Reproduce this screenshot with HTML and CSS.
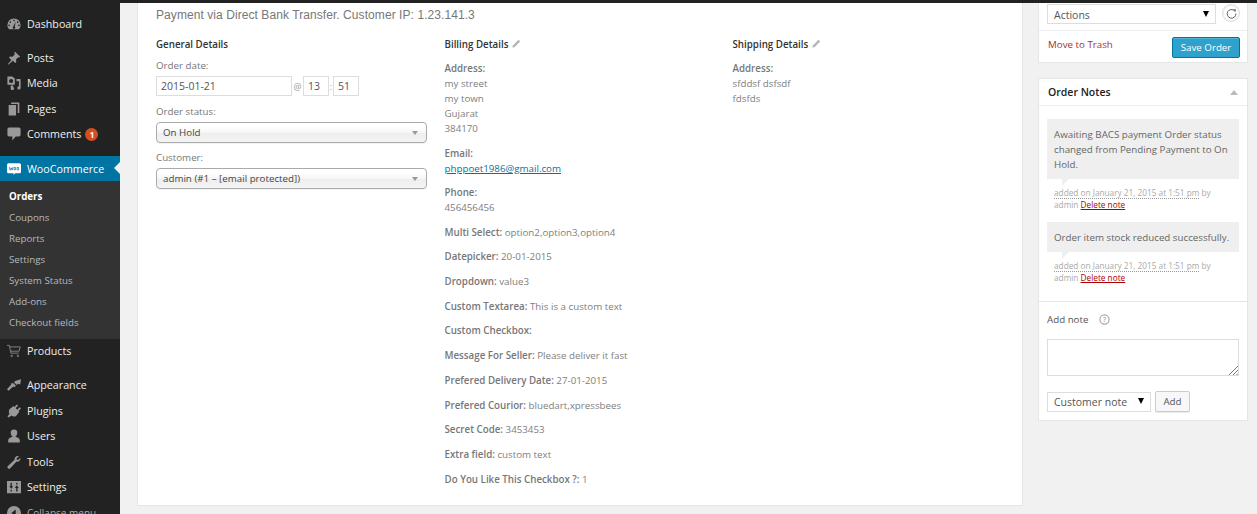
FILE: index.html
```html
<!DOCTYPE html>
<html lang="en">
<head>
<meta charset="utf-8">
<title>Edit Order</title>
<link rel="stylesheet" href="styles.css">
</head>
<body>
<div class="topbar"></div>
<div class="shell">
  <nav class="sidebar">
    <a class="item first"><svg class="ico" viewBox="1.500 2.500 17 14.500"><path d="M10 3a8 8 0 0 0-8 8c0 2 .7 3.800 2 5h12c1.300-1.200 2-3 2-5a8 8 0 0 0-8-8zM10 4.500a1 1 0 1 1 0 2 1 1 0 0 1 0-2zM5.500 6.500a1 1 0 1 1 0 2 1 1 0 0 1 0-2zM14.500 6.500a1 1 0 1 1 0 2 1 1 0 0 1 0-2zM4 10.500a1 1 0 1 1 0 2 1 1 0 0 1 0-2zM16 10.500a1 1 0 1 1 0 2 1 1 0 0 1 0-2zM12 7l-1 6.200a1.500 1.500 0 1 1-2 0z" fill-rule="evenodd"/></svg>Dashboard</a>
    <a class="item gap"><svg class="ico" viewBox="1.500 1.500 17 18"><path d="M11 2l7 7-1.500 1-1-.5-3 3 .5 3-1.500 1.500-3-3L3 19l-1-.5 4.500-5.500-3-3L5 8.500l3 .5 3-3-.5-1z"/></svg>Posts</a>
    <a class="item"><svg class="ico" viewBox="1.500 1.500 17 17"><path d="M2 2h6l2 2h1v8H2zM6.500 5a2.500 2.500 0 1 0 0 5 2.500 2.500 0 0 0 0-5zM13 5h5v11a2 2 0 1 1-2-2V8h-3zM6 13h3v2a2 2 0 1 1-3 1.500z" fill-rule="evenodd"/></svg>Media</a>
    <a class="item"><svg class="ico" viewBox="3 1.500 15 17"><path d="M7 2h10v13h-2V4H7zM4 5h9v13H4z"/></svg>Pages</a>
    <a class="item"><svg class="ico" viewBox="1.500 2.500 17 17"><path d="M4 3h12a2 2 0 0 1 2 2v7a2 2 0 0 1-2 2h-4l-4 5v-5H4a2 2 0 0 1-2-2V5a2 2 0 0 1 2-2z"/></svg>Comments<span class="badge">1</span></a>
    <a class="item woo"><svg class="ico woo-ico" viewBox="1 2.500 18 16"><path d="M3 3h14a2 2 0 0 1 2 2v9a2 2 0 0 1-2 2h-5l-3 2 .5-2H3a2 2 0 0 1-2-2V5a2 2 0 0 1 2-2z" fill="#fff"/><path d="M4 8l1 4 1.500-3 1 3 1.300-4M10 8.500h2v3h-2zM14 8.500h2v3h-2z" fill="none" stroke="#0074a2" stroke-width=".9"/></svg>WooCommerce<span class="caret"></span></a>
    <div class="submenu">
      <a class="sub current">Orders</a>
      <a class="sub">Coupons</a>
      <a class="sub">Reports</a>
      <a class="sub">Settings</a>
      <a class="sub">System Status</a>
      <a class="sub">Add-ons</a>
      <a class="sub">Checkout fields</a>
    </div>
    <a class="item products"><svg class="ico" viewBox="1 2.500 18 15.500"><path d="M1 3h3l2 10h10M4.500 5H18l-1.500 5.500H6M7 15.500a1 1 0 1 0 0 2 1 1 0 0 0 0-2zM15 15.500a1 1 0 1 0 0 2 1 1 0 0 0 0-2z" fill="none" stroke="currentColor" stroke-width="1"/></svg>Products</a>
    <a class="item gap2"><svg class="ico" viewBox="1 2.500 18 16"><path d="M19 3l-1 7-3-1-1.500 1.500L10 7l1.500-1.500zM9 8l3.500 3.500-2 2L9 12.500 3 18l-2-2 5.500-6L5.500 9z"/></svg>Appearance</a>
    <a class="item"><svg class="ico" viewBox="2 1.500 17 17"><path d="M14 2l1.500 1.500-3 3 2 2 3-3L19 7l-3 3 1 1-4 5c-2 1-4 1-5.500-.5L4 18l-1.500-1.500 2.500-3C4 12 4 10 5 8l5-4 1 1z"/></svg>Plugins</a>
    <a class="item"><svg class="ico" viewBox="2.500 1.500 15 17"><path d="M10 2a4 4 0 0 1 4 4c0 2-1 4-2.500 5 3 .5 5.500 2 5.500 4v3H3v-3c0-2 2.500-3.500 5.500-4C7 10 6 8 6 6a4 4 0 0 1 4-4z"/></svg>Users</a>
    <a class="item"><svg class="ico" viewBox="2 1.500 17.500 18"><path d="M17 3l-3 3 .5 1.500L16 8l3-3c.3 3-1.500 5.500-5 5l-8 8.500a1.500 1.500 0 0 1-3-3l8.500-8C11 4 14 1.800 17 3z"/></svg>Tools</a>
    <a class="item"><svg class="ico" viewBox="2 3 16 14"><path d="M2 3h16v14H2zM6 5v4H4.500L7 12l2-3H7.500V5zM12.500 15v-4H11l2-3 2.500 3H14v4zM6 13v2h1.500v-2zM12.500 5v2H14V5z" fill-rule="evenodd"/></svg>Settings</a>
    <a class="collapse"><svg class="ico-small" viewBox="2 2 16 16"><path d="M10 2a8 8 0 1 1 0 16 8 8 0 0 1 0-16zm2 4L7 10l5 4z" fill-rule="evenodd"/></svg>Collapse menu</a>
  </nav>

  <main class="content">
    <section class="order-card">
      <p class="payment">Payment via Direct Bank Transfer. Customer IP: 1.23.141.3</p>
      <div class="columns">
        <div class="col col-general">
          <h4>General Details</h4>
          <label class="f-label first-label">Order date:</label>
          <div class="date-row">
            <span class="input date">2015-01-21</span><span class="sep">@</span><span class="input time">13</span><span class="sep colon">:</span><span class="input time">51</span>
          </div>
          <label class="f-label status-label">Order status:</label>
          <div class="chosen"><span>On Hold</span><i class="tri"></i></div>
          <label class="f-label">Customer:</label>
          <div class="chosen"><span>admin (#1 – [email protected])</span><i class="tri"></i></div>
        </div>
        <div class="col col-billing">
          <h4>Billing Details <svg class="pencil" viewBox="0 0 12 12"><path d="M9 1l2 2-6.500 6.500-3 1 1-3z"/></svg></h4>
          <p class="block"><b>Address:</b><br>my street<br>my town<br>Gujarat<br>384170</p>
          <p class="block"><b>Email:</b><br><a class="mail">phppoet1986@gmail.com</a></p>
          <p class="block"><b>Phone:</b><br>456456456</p>
          <p class="line"><b>Multi Select:</b> option2,option3,option4</p>
          <p class="line"><b>Datepicker:</b> 20-01-2015</p>
          <p class="line"><b>Dropdown:</b> value3</p>
          <p class="line"><b>Custom Textarea:</b> This is a custom text</p>
          <p class="line"><b>Custom Checkbox:</b></p>
          <p class="line"><b>Message For Seller:</b> Please deliver it fast</p>
          <p class="line"><b>Prefered Delivery Date:</b> 27-01-2015</p>
          <p class="line"><b>Prefered Courior:</b> bluedart,xpressbees</p>
          <p class="line"><b>Secret Code:</b> 3453453</p>
          <p class="line"><b>Extra field:</b> custom text</p>
          <p class="line"><b>Do You Like This Checkbox ?:</b> 1</p>
        </div>
        <div class="col col-shipping">
          <h4>Shipping Details <svg class="pencil" viewBox="0 0 12 12"><path d="M9 1l2 2-6.500 6.500-3 1 1-3z"/></svg></h4>
          <p class="block"><b>Address:</b><br>sfddsf dsfsdf<br>fdsfds</p>
        </div>
      </div>
    </section>

    <aside class="side">
      <section class="box actions-box">
        <div class="actions-row">
          <div class="native actions-select"><span>Actions</span><i class="arrow"></i></div>
          <span class="refresh"><svg viewBox="0 0 18 18"><path d="M13.500 5.500A6 6 0 1 0 15 9" fill="none" stroke="#555" stroke-width="1.300"/><path d="M11.500 3.500l3.500-.5-.3 3.800z" fill="#555"/></svg></span>
        </div>
        <div class="save-row">
          <a class="trash">Move to Trash</a>
          <span class="save">Save Order</span>
        </div>
      </section>

      <section class="box notes-box">
        <header class="notes-head"><h3>Order Notes</h3><i class="up"></i></header>
        <div class="notes">
          <div class="note">
            <div class="note-text">Awaiting BACS payment Order status changed from Pending Payment to On Hold.</div>
            <p class="meta"><abbr>added on January 21, 2015 at 1:51 pm</abbr> by admin <a>Delete note</a></p>
          </div>
          <div class="note">
            <div class="note-text">Order item stock reduced successfully.</div>
            <p class="meta"><abbr>added on January 21, 2015 at 1:51 pm</abbr> by admin <a>Delete note</a></p>
          </div>
        </div>
        <div class="add-note">
          <div class="add-title">Add note <svg class="help" viewBox="0 0 12 12"><circle cx="6" cy="6" r="5" fill="none" stroke="#aaa" stroke-width="1.300"/><text x="6" y="8.700" text-anchor="middle" class="help-q">?</text></svg></div>
          <div class="textarea"><svg class="grip" viewBox="0 0 9 9"><path d="M0 9L9 0M4 9l5-5M7.500 9L9 7.500" stroke="#555" stroke-width=".8"/></svg></div>
          <div class="add-row">
            <div class="native note-type"><span>Customer note</span><i class="arrow"></i></div>
            <span class="add-btn">Add</span>
          </div>
        </div>
      </section>
    </aside>
  </main>
</div>
</body>
</html>
```
FILE: styles.css
```css
* { box-sizing: border-box; }
html, body { margin: 0; height: 514px; overflow: hidden; }
body { background: #f1f1f1; font-family: "Open Sans", sans-serif; font-size: 9.750px; color: #777; }
.topbar { height: 3px; background: #222; }
.shell { display: flex; height: 511px; }

.sidebar { width: 120px; flex: none; background: #222; color: #eee; font-size: 10.700px; display: flex; flex-direction: column; overflow: hidden; }
.item { display: flex; align-items: center; height: 25.500px; flex: none; padding-left: 7px; color: #eee; position: relative; }
.item.first { margin-top: 8px; }
.item.gap { margin-top: 8.500px; }
.item.woo { margin-top: 9px; height: 25px; background: #0074a2; color: #fff; }
.item.products { height: 24px; }
.item.gap2 { margin-top: 9.300px; }
.ico { width: 14px; height: 14px; margin-right: 6px; fill: #999; color: #999; flex: none; }
.badge { display: inline-block; width: 13px; height: 13px; border-radius: 50%; background: #d54e21; color: #fff; font-size: 8px; font-weight: 700; line-height: 13px; text-align: center; margin-left: 4px; }
.caret { position: absolute; right: 0; top: 6px; border: 6px solid transparent; border-right-color: #f1f1f1; border-left: 0; }
.submenu { background: #333; height: 158px; padding-top: 5px; flex: none; }
.sub { display: block; height: 21px; line-height: 21px; padding-left: 9px; font-size: 9.750px; color: #b4b9be; white-space: nowrap; }
.sub.current { color: #fff; font-weight: 700; }
.collapse { display: flex; align-items: center; padding-left: 7px; height: 27px; flex: none; color: #aaa; font-size: 10px; white-space: nowrap; }
.ico-small { width: 14px; height: 14px; margin-right: 6px; fill: #999; }

.content { flex: 1; min-width: 0; display: flex; align-items: flex-start; padding-left: 17px; gap: 15px; }
.order-card { width: 886px; height: 503px; flex: none; background: #fff; border: 1px solid #e5e5e5; border-top: 0; padding: 5px 18px 0; }
.payment { margin: 0; font-family: "Liberation Sans", sans-serif; font-size: 12px; line-height: 14px; color: #777; letter-spacing: .07px; }
.columns { display: flex; margin-top: 15px; }
.col { flex: none; }
.col-general { width: 288.500px; }
.col-billing { width: 288px; }
h4 { margin: 0; font-size: 9.750px; line-height: 15px; font-weight: 600; color: #333; }
.pencil { width: 10px; height: 10px; fill: #b5b5b5; vertical-align: -1px; margin-left: 0; }
.f-label { display: block; font-size: 9.750px; line-height: 15px; margin-top: 7px; color: #777; }
.first-label { margin-top: 6px; }
.status-label { margin-top: 8px; }
.date-row { display: flex; align-items: center; height: 20px; margin-top: 3px; }
.input { display: block; height: 20px; border: 1px solid #ddd; font-size: 10.500px; line-height: 18px; color: #555; padding-left: 4px; background: #fff; }
.date { width: 136px; }
.time { width: 26px; padding-left: 4px; }
.sep { width: 11px; text-align: center; font-size: 9px; color: #999; }
.sep.colon { width: 4px; }
.chosen { display: flex; align-items: center; justify-content: space-between; width: 271px; height: 21px; margin-top: 3px; padding: 0 8px 0 6px; border: 1px solid #aaa; border-radius: 4px; background: linear-gradient(#fff 20%, #f6f6f6 50%, #eee 52%, #f4f4f4); box-shadow: 0 1px 0 rgba(0,0,0,.05); font-size: 9.750px; color: #444; }
.tri { width: 0; height: 0; border: 3px solid transparent; border-top: 4px solid #999; border-bottom: 0; }
.block { margin: 0; padding-top: 9px; font-size: 9.750px; line-height: 15px; color: #808080; }
.block + .block { padding-top: 9.500px; }
.block b { font-weight: 600; color: #777; }
.mail { color: #0074a2; text-decoration: underline; }
.line { margin: 0; padding-top: 9.700px; font-size: 9.750px; line-height: 15px; color: #808080; white-space: nowrap; }
.line b { font-weight: 600; color: #777; }

.side { width: 210px; flex: none; display: flex; flex-direction: column; gap: 15px; }
.box { background: #fff; border: 1px solid #e5e5e5; }
.actions-box { border-top: 0; height: 60px; }
.actions-row { height: 28px; display: flex; align-items: flex-start; padding: 1px 0 0 8px; border-bottom: 1px solid #eee; }
.native { display: flex; align-items: center; justify-content: space-between; height: 20px; border: 1px solid #ddd; background: #fff; font-size: 10.500px; color: #555; padding: 1px 6px 0 6px; }
.actions-select { width: 169px; }
.arrow { width: 0; height: 0; border: 3px solid transparent; border-top: 6px solid #000; border-bottom: 0; margin-top: -2px; }
.refresh { display: flex; align-items: center; justify-content: center; width: 18px; height: 18px; border: 1px solid #ddd; border-radius: 50%; margin-left: 6px; box-shadow: inset 0 0 0 1px #f1f1f1; }
.refresh svg { display: block; width: 13px; height: 13px; }
.save-row { display: flex; justify-content: space-between; padding: 6px 7px 0 9px; align-items: flex-start; }
.trash { font-size: 9.750px; line-height: 15px; color: #a8321f; }
.save { display: block; width: 68px; height: 21px; background: #2ea2cc; border: 1px solid #0074a2; border-radius: 2px; color: #fff; font-size: 9.750px; line-height: 19px; text-align: center; box-shadow: inset 0 1px 0 rgba(120,200,230,.5); }
.notes-box { height: 343px; }
.notes-head { display: flex; align-items: center; justify-content: space-between; height: 27px; padding: 0 9px 0 9px; border-bottom: 1px solid #eee; }
h3 { margin: 0; font-size: 10.500px; font-weight: 600; color: #222; }
.up { width: 0; height: 0; border: 4px solid transparent; border-bottom: 5px solid #bbb; border-top: 0; }
.notes { padding: 13px 8px 0 8px; height: 196px; border-bottom: 1px solid #e5e5e5; }
.note { margin-bottom: 11px; }
.note-text { background: #efefef; padding: 7.500px 7px; font-size: 9.750px; line-height: 15px; color: #666; position: relative; }
.note-text::after { content: ""; position: absolute; left: 15px; bottom: -7px; border-top: 7px solid #efefef; border-right: 7px solid transparent; }
.meta { margin: 0; padding: 8px 7px 0; font-size: 8.250px; line-height: 12px; color: #aaa; }
.meta abbr { border-bottom: 1px dotted #999; }
.meta a { color: #a00; text-decoration: underline; }
.add-note { padding: 0 8px; }
.add-title { font-size: 9.750px; color: #555; height: 37px; line-height: 35px; }
.help { width: 11px; height: 11px; margin-left: 8px; vertical-align: -2px; }
.help-q { font-size: 7.500px; fill: #aaa; font-family: "Open Sans", sans-serif; font-weight: 600; }
.textarea { position: relative; height: 37px; border: 1px solid #ddd; background: #fff; }
.grip { position: absolute; right: 0; bottom: 0; width: 9px; height: 9px; }
.add-row { display: flex; align-items: center; margin-top: 15px; gap: 4px; }
.note-type { width: 104px; height: 20px; padding-top: 0; }
.add-btn { display: block; width: 35px; height: 21px; background: #f7f7f7; border: 1px solid #ccc; border-radius: 2px; text-align: center; font-size: 9.750px; line-height: 19px; color: #555; box-shadow: 0 1px 0 rgba(0,0,0,.08); }
```
